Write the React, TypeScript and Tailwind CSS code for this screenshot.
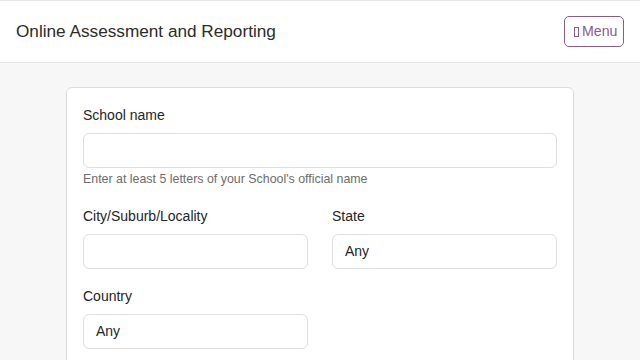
export default function App() {
  return (
    <div
      className="min-h-[360px] bg-[#f7f7f8] text-[#212529]"
      style={{ fontFamily: '"Liberation Sans", Arial, sans-serif' }}
    >
      <header className="h-[63px] bg-white border-t border-b border-[#e5e5e5] flex items-center justify-between pl-4 pr-4">
        <h1 className="text-[17.2px] text-[#2b2b2b]">Online Assessment and Reporting</h1>
        <button
          type="button"
          className="h-[31px] w-[60px] pl-[9px] flex items-center gap-[3px] rounded-[5px] border border-[#8c5a91] text-[#8c5a91] text-[14.2px]"
        >
          <span className="inline-block w-[5px] h-[10px] border border-[#8c5a91]" />
          Menu
        </button>
      </header>

      <main className="pt-[24px] px-[66px]">
        <form className="bg-white border border-[#dcdcdc] rounded-[6px] px-4 pt-[17px] pb-6">
          <div>
            <label htmlFor="school_name" className="block text-[14px] leading-[20px] mb-[8px]">
              School name
            </label>
            <input
              id="school_name"
              type="text"
              className="block w-full h-[35px] rounded-[6px] border border-[#dedede] px-3 text-[14px]"
            />
            <p className="text-[12.4px] leading-[16px] text-[#6c6c6c] mt-[3px]">
              Enter at least 5 letters of your School's official name
            </p>
          </div>

          <div className="grid grid-cols-2 gap-x-6 mt-[19px]">
            <div>
              <label htmlFor="city" className="block text-[14px] leading-[20px] mb-[8px]">
                City/Suburb/Locality
              </label>
              <input
                id="city"
                type="text"
                className="block w-full h-[35px] rounded-[6px] border border-[#dedede] px-3 text-[14px]"
              />
            </div>
            <div>
              <label htmlFor="state" className="block text-[14px] leading-[20px] mb-[8px]">
                State
              </label>
              <div
                id="state"
                className="w-full h-[35px] rounded-[6px] border border-[#dedede] px-3 text-[14px] flex items-center"
              >
                Any
              </div>
            </div>
          </div>

          <div className="grid grid-cols-2 gap-x-6 mt-[17px]">
            <div>
              <label htmlFor="country" className="block text-[14px] leading-[20px] mb-[8px]">
                Country
              </label>
              <div
                id="country"
                className="w-full h-[35px] rounded-[6px] border border-[#dedede] px-3 text-[14px] flex items-center"
              >
                Any
              </div>
            </div>
          </div>
        </form>
      </main>
    </div>
  );
}
